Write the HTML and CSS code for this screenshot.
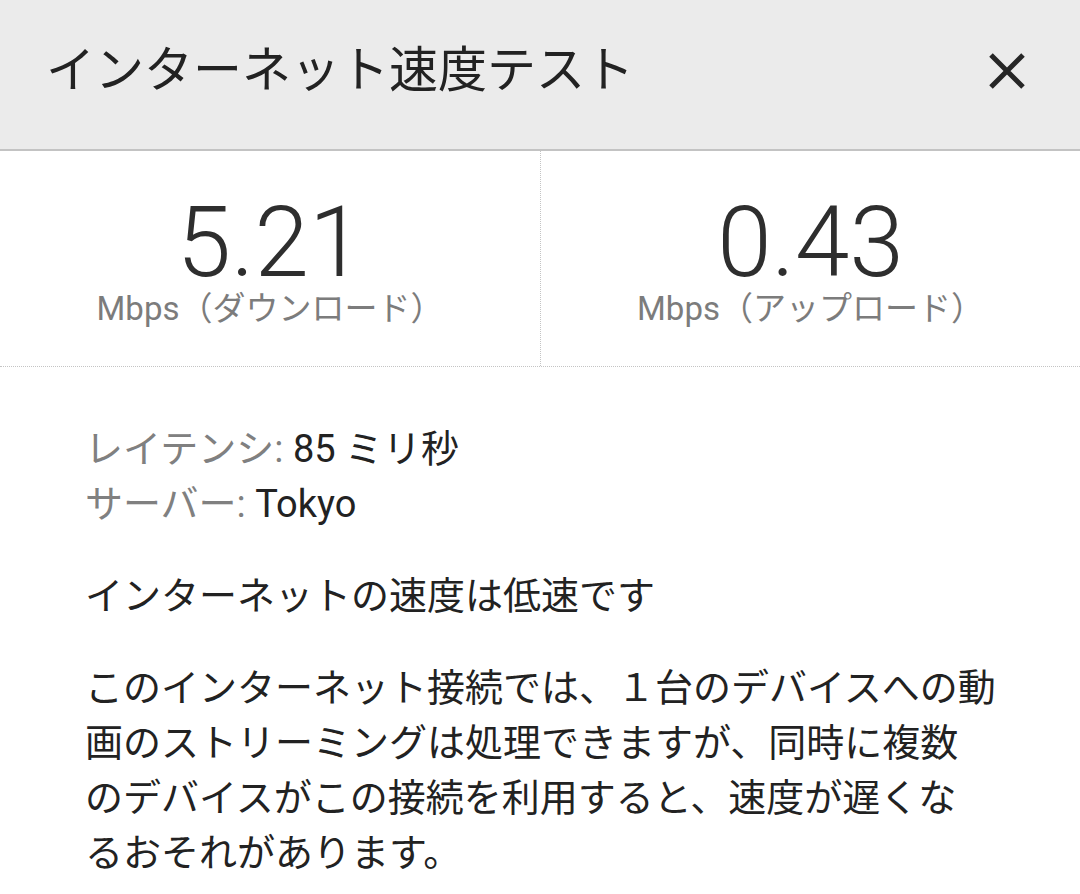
FILE: index.html
```html
<!DOCTYPE html>
<html lang="ja">
<head>
<meta charset="utf-8">
<title>インターネット速度テスト</title>
<link rel="stylesheet" href="styles.css">
</head>
<body>
<div class="page">
  <header class="header">
    <h1 class="title">インターネット速度テスト</h1>
    <button class="close" aria-label="閉じる">
      <svg viewBox="0 0 38 38" width="38" height="38"><path d="M3 3 L35 35 M35 3 L3 35" stroke="#262626" stroke-width="5" fill="none"/></svg>
    </button>
  </header>
  <section class="stats">
    <div class="stat stat-left">
      <div class="num">5.21</div>
      <div class="unit">Mbps（ダウンロード）</div>
    </div>
    <div class="stat">
      <div class="num">0.43</div>
      <div class="unit">Mbps（アップロード）</div>
    </div>
  </section>
  <section class="details">
    <div class="info">
      <div class="row"><span class="label">レイテンシ:</span> <span class="value">85 ミリ秒</span></div>
      <div class="row"><span class="label">サーバー:</span> <span class="value">Tokyo</span></div>
    </div>
    <p class="status">インターネットの速度は低速です</p>
    <p class="desc">このインターネット接続では、１台のデバイスへの動<br>画のストリーミングは処理できますが、同時に複数<br>のデバイスがこの接続を利用すると、速度が遅くな<br>るおそれがあります。</p>
  </section>
</div>
</body>
</html>
```
FILE: styles.css
```css
* { box-sizing: border-box; }
html, body {
  margin: 0;
  padding: 0;
  background: #ffffff;
}
body {
  font-family: "Roboto", "Noto Sans CJK JP", sans-serif;
  color: #222222;
}
.page {
  width: 1080px;
}
.header {
  height: 151px;
  background: #ebebeb;
  border-bottom: 2px solid #c3c3c3;
  display: flex;
  align-items: center;
  justify-content: space-between;
  padding: 0 54px 8px 46px;
}
.title {
  margin: 0;
  font-size: 49px;
  line-height: 49px;
  font-weight: 400;
  color: #222222;
}
.close {
  border: 0;
  background: transparent;
  padding: 0;
  width: 38px;
  height: 38px;
  display: flex;
}
.stats {
  display: grid;
  grid-template-columns: 541px 1fr;
  height: 216px;
  border-bottom: 1px dotted #c4c4c4;
}
.stat {
  display: flex;
  flex-direction: column;
  align-items: center;
  padding-top: 46px;
}
.stat-left {
  border-right: 1px dotted #c4c4c4;
}
.num {
  font-size: 98px;
  line-height: 92px;
  font-weight: 300;
  color: #2e2e2e;
}
.unit {
  font-size: 33px;
  line-height: 40px;
  color: #7c7c7c;
}
.details {
  padding: 55px 0 0 85px;
  font-size: 38px;
  line-height: 55px;
}
.label {
  color: #808080;
}
.value {
  color: #222222;
}
.status {
  margin: 37px 0 0;
  color: #222222;
}
.desc {
  margin: 37px 0 0;
  color: #222222;
}
```
